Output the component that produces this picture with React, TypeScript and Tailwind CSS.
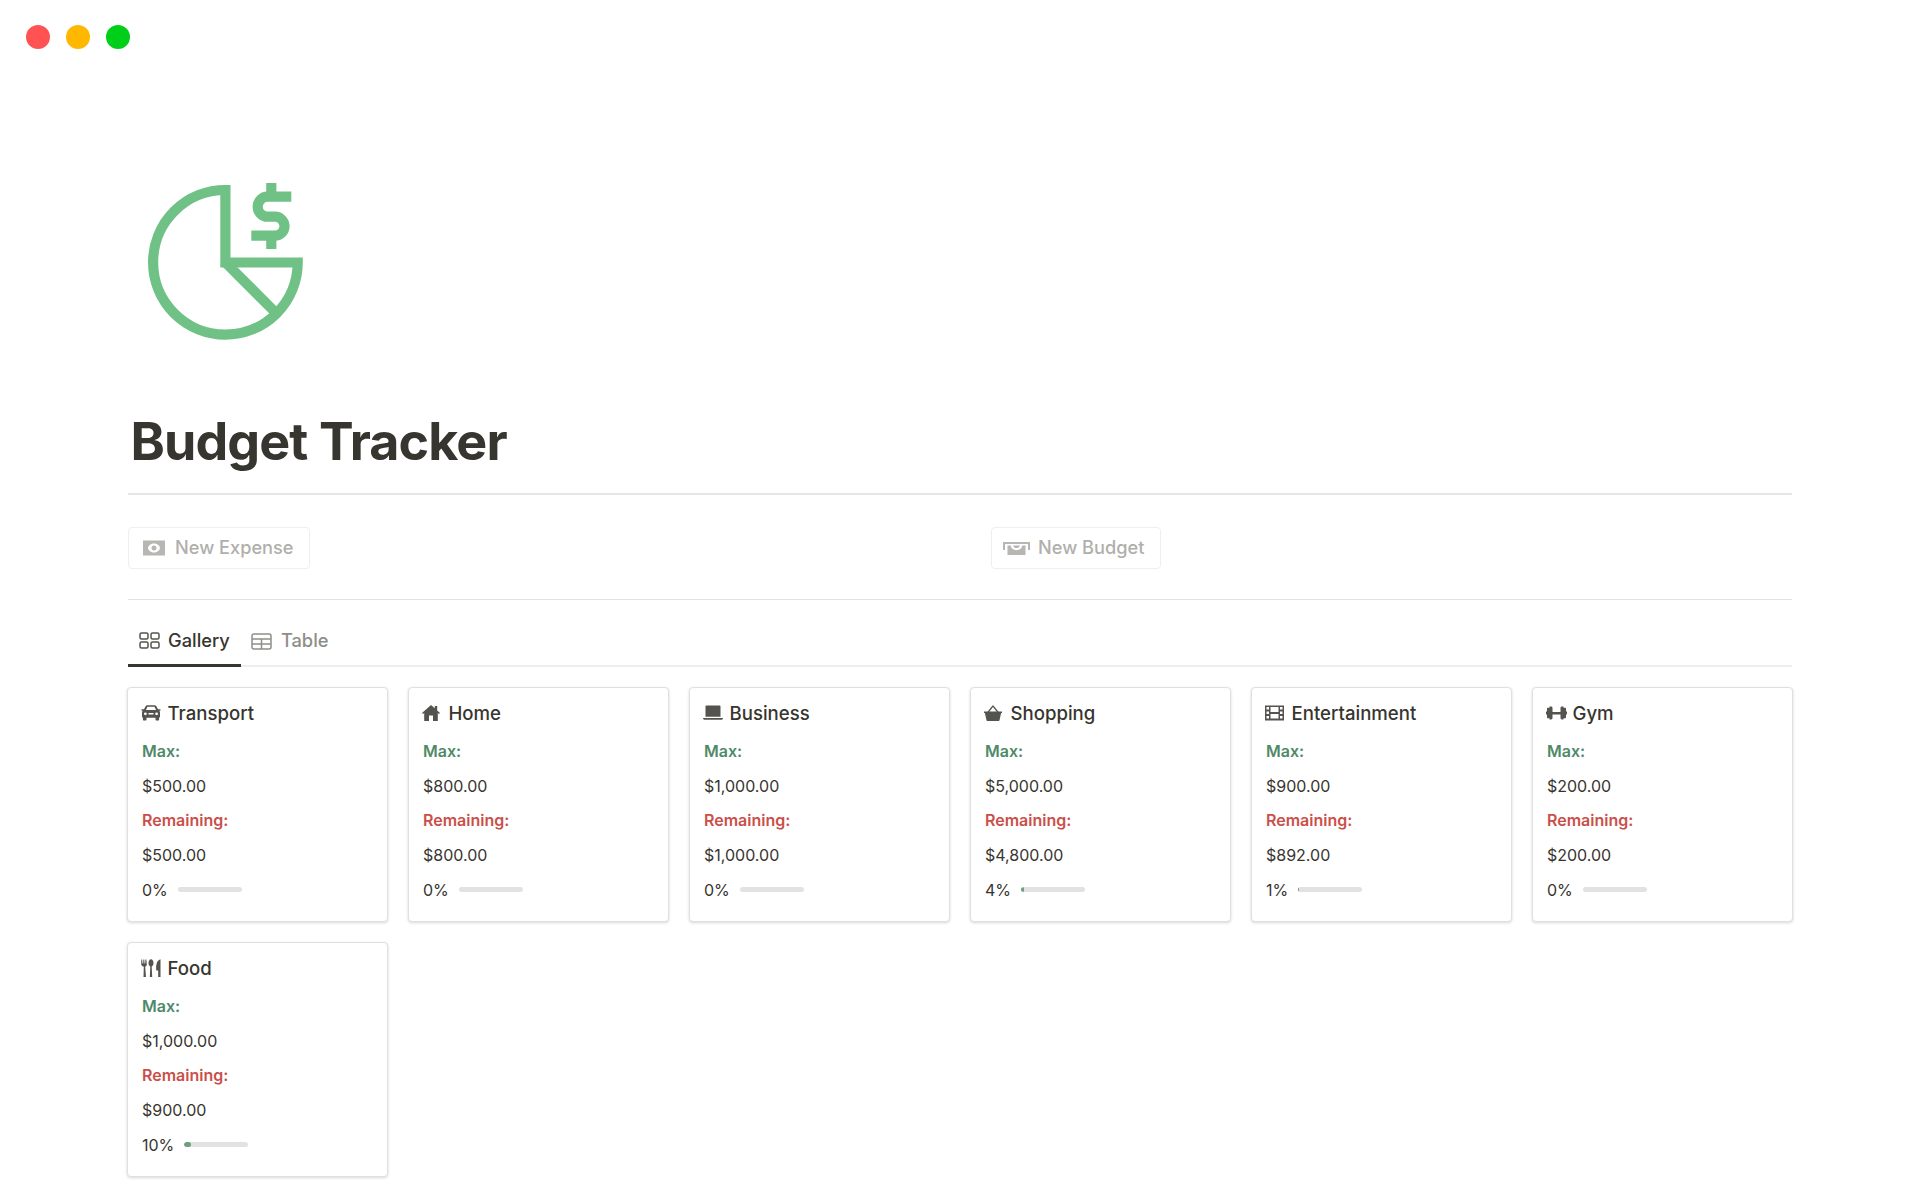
const budgets = [
  { name: 'Transport', icon: 'car', max: '$500.00', remaining: '$500.00', pct: 0 },
  { name: 'Home', icon: 'home', max: '$800.00', remaining: '$800.00', pct: 0 },
  { name: 'Business', icon: 'laptop', max: '$1,000.00', remaining: '$1,000.00', pct: 0 },
  { name: 'Shopping', icon: 'basket', max: '$5,000.00', remaining: '$4,800.00', pct: 4 },
  { name: 'Entertainment', icon: 'film', max: '$900.00', remaining: '$892.00', pct: 1 },
  { name: 'Gym', icon: 'gym', max: '$200.00', remaining: '$200.00', pct: 0 },
  { name: 'Food', icon: 'food', max: '$1,000.00', remaining: '$900.00', pct: 10 },
];

function PieIcon() {
  return (
    <svg width="170" height="170" viewBox="140 175 170 170" fill="none" stroke="#70c186" strokeWidth="10.2">
      <path d="M225.4 190 A72.3 72.3 0 1 0 297.7 262.5 H225.4 Z" strokeLinejoin="miter" />
      <path d="M225.4 262.5 L276 313" />
      <path d="M291.3 196.7 H267.7 a10 10 0 0 0 0 20 H275 a9.5 9.5 0 0 1 0 19 H251.3" />
      <path d="M271.3 183 V192 M271.3 240 V249" />
    </svg>
  );
}

function CardIcon({ name }: { name: string }) {
  const fill = '#55534e';
  switch (name) {
    case 'car':
      return (
        <svg width="20" height="16" viewBox="0 0 20 16" fill={fill}>
          <path d="M4.6 1.2C5 .5 5.6.2 6.4.2h7.2c.8 0 1.4.3 1.8 1l1.6 3.1h1.9c.4 0 .8.3.8.7s-.4.8-.8.8h-.7c.5.5.8 1.1.8 1.8v4.1c0 .5-.4.9-.9.9v1.9c0 .6-.4 1-1 1h-1.6c-.6 0-1-.4-1-1v-1.8H5.5v1.8c0 .6-.4 1-1 1H2.9c-.6 0-1-.4-1-1v-1.900c-.5 0-.9-.4-.9-.9V7.600c0-.7.3-1.300.8-1.800H1.100C.7 5.800.3 5.400.3 5s.4-.7.8-.7H3zM6.500 1.800 4.900 5h10.200l-1.600-3.200zM4.400 7.400a1.400 1.400 0 1 0 0 2.800 1.400 1.400 0 0 0 0-2.800zm11.200 0a1.400 1.400 0 1 0 0 2.800 1.400 1.400 0 0 0 0-2.800zM7.500 8v1.600h5V8z" fillRule="evenodd" />
        </svg>
      );
    case 'home':
      return (
        <svg width="18" height="16" viewBox="0 0 18 16" fill={fill}>
          <path d="M9 0 L12.800 3.300 V1 H15.200 V5.400 L18 7.900 L17 9 L15.800 8 V16 H11 V10.500 H7 V16 H2.200 V8 L1 9 L0 7.900 Z" />
        </svg>
      );
    case 'laptop':
      return (
        <svg width="20" height="16" viewBox="0 0 20 16" fill={fill}>
          <path d="M2.500 1.600C2.500.900 3 .400 3.700.400h12.600c.7 0 1.200.5 1.200 1.200v10.200h-15z" />
          <path d="M0 13h20c0 1-.8 1.800-1.800 1.800H1.800C.8 14.800 0 14 0 13z" />
        </svg>
      );
    case 'basket':
      return (
        <svg width="18" height="16" viewBox="0 0 18 16" fill={fill}>
          <path d="M0 6.400h18v1.700h-.9L15.500 15.300c-.1.400-.4.700-.9.700H3.400c-.5 0-.8-.3-.9-.7L.9 8.100H0z" />
          <path d="M3.500 6.700 8.100.900c.5-.6 1.300-.6 1.800 0l4.600 5.800-1.200.9L9 1.900 4.700 7.600z" />
        </svg>
      );
    case 'film':
      return (
        <svg width="19" height="16" viewBox="0 0 19 16" fill={fill}>
          <path fillRule="evenodd" d="M0 .500h19v15H0zM1.500 2v2.500H4V2zm0 4.500V9H4V6.500zm0 4.500v2.500H4V11zM15 2v2.500h2.500V2zm0 4.500V9h2.500V6.500zm0 4.500v2.500h2.500V11zM5.500 2v5h8V2zm0 7v4.500h8V9z" />
        </svg>
      );
    case 'gym':
      return (
        <svg width="21" height="16" viewBox="0 0 21 16" fill={fill}>
          <path d="M3.500 1.500h1.600c.8 0 1.400.6 1.400 1.400v4h8V2.900c0-.8.6-1.400 1.400-1.400h1.600v1.200H19c.6 0 1 .4 1 1v2.800h1v3h-1v2.800c0 .6-.4 1-1 1h-1.500v1.200h-1.600c-.8 0-1.400-.6-1.400-1.400V9.500h-8v3.600c0 .8-.6 1.400-1.400 1.400H3.500v-1.200H2c-.6 0-1-.4-1-1V9.500H0v-3h1V3.700c0-.6.4-1 1-1h1.500z" />
        </svg>
      );
    default:
      return (
        <svg width="20" height="18" viewBox="0 0 20 18" fill={fill}>
          <path d="M.3.400h.9l.3 4h.7l.2-4h.9l.2 4h.7l.3-4h.9l.4 5c0 1.100-.8 1.900-1.600 2.200L5 18H2.500l.3-10.400C2 7.300.2 6.500.2 5.400z" />
          <path d="M10 .300c1.500 0 2.500 1.800 2.500 3.800 0 1.700-.8 3-1.800 3.400L11.200 18H8.800l.5-10.500c-1-.4-1.800-1.700-1.800-3.400 0-2 1-3.800 2.500-3.800z" />
          <path d="M19.500.200V18h-2.300v-6.500h-1.900C14.900 7.500 15 1.500 19.500.200z" />
        </svg>
      );
  }
}

function BudgetCard({ name, icon, max, remaining, pct }: (typeof budgets)[number]) {
  return (
    <div className="h-[235px] rounded-[4px] border border-[#e1e0de] bg-white px-[14px] pt-[8px] shadow-[0_1px_3px_rgba(15,15,15,0.16)]">
      <div className="flex h-[35px] items-center text-[18.6px] font-medium text-[#37352f]">
        <span className="flex w-[24.5px] shrink-0 -translate-x-[1px] -translate-y-[1px] items-center">
          <CardIcon name={icon} />
        </span>
        <span className="ml-[1px]">{name}</span>
      </div>
      <div className="mt-[2.5px] flex h-[34.7px] items-center text-[16px] font-semibold text-[#4f8a68]">Max:</div>
      <div className="flex h-[34.7px] items-center text-[16px] text-[#37352f]">{max}</div>
      <div className="flex h-[34.7px] items-center text-[16px] font-semibold text-[#cb4f49]">Remaining:</div>
      <div className="flex h-[34.7px] items-center text-[16px] text-[#37352f]">{remaining}</div>
      <div className="flex h-[35px] items-center gap-[10px] text-[16px] text-[#37352f]">
        <span>{pct}%</span>
        <div className="h-[5px] w-[64px] overflow-hidden rounded-full bg-[#e3e2e0]">
          <div className="h-full rounded-full bg-[#6d9f82]" style={{ width: `${pct}%` }} />
        </div>
      </div>
    </div>
  );
}

export default function App() {
  return (
    <div className="h-[1200px] overflow-hidden bg-white font-['Inter',sans-serif]">
      {/* window controls */}
      <div className="flex gap-[16px] pl-[26px] pt-[25px]">
        <span className="h-[24px] w-[24px] rounded-full bg-[#ff5252]" />
        <span className="h-[24px] w-[24px] rounded-full bg-[#ffb700]" />
        <span className="h-[24px] w-[24px] rounded-full bg-[#00cf1a]" />
      </div>

      <div className="px-[128px]">
        <div className="ml-[12px] mt-[126px]">
          <PieIcon />
        </div>

        <h1 className="mt-[65px] pl-[2.500px] text-[52px] leading-[64px] font-bold tracking-[-0.0175em] text-[#37352f]">
          Budget Tracker
        </h1>
        <div className="mt-[19px] h-[2px] bg-[#e6e5e3]" />

        <div className="mt-[32px] grid grid-cols-2 gap-x-[62px]">
          <div>
            <button className="flex h-[42px] items-center gap-[10px] rounded-[4px] border border-[#efefee] pl-[14px] pr-[15px] text-[18.2px] font-medium text-[#b0afab]">
              <svg width="22" height="16" viewBox="0 0 22 16" fill="#b7b6b3">
                <path fillRule="evenodd" d="M0 .500h22v15H0zM11 3.500c-3.600 0-6 2.700-6 4.500s2.400 4.500 6 4.500 6-2.700 6-4.500-2.400-4.500-6-4.500zm0 2a2.500 2.500 0 1 1 0 5 2.500 2.500 0 0 1 0-5z" />
              </svg>
              New Expense
            </button>
          </div>
          <div>
            <button className="flex h-[42px] items-center gap-[8px] rounded-[4px] border border-[#efefee] pl-[11px] pr-[16px] text-[18.2px] font-medium text-[#b0afab]">
              <svg width="27" height="15" viewBox="0 0 27 15" fill="#b7b6b3">
                <path fillRule="evenodd" d="M0 1h27v2H2v6H0zM25 3h2v6h-2zM4.500 4.500h3.200c.4 2.800 2.700 4.700 5.800 4.700s5.400-1.900 5.800-4.700h3.200V14h-18zM10 4.500h7c-.3 1.500-1.800 2.600-3.500 2.600S10.300 6 10 4.500z" />
              </svg>
              New Budget
            </button>
          </div>
        </div>
        <div className="mt-[30px] h-[1px] bg-[#e3e2e0]" />

        {/* view tabs */}
        <div className="mt-[20px] flex h-[47px] border-b-2 border-[#eeeeed]">
          <div className="-mb-[2px] flex items-center gap-[8px] border-b-[3px] border-[#37352f] px-[11px] pb-[3px] text-[18.3px] font-medium text-[#37352f]">
            <svg width="21" height="17" viewBox="0 0 21 17" fill="none" stroke="#55534e" strokeWidth="1.500">
              <rect x="1" y="1" width="8" height="6" rx="1.500" />
              <rect x="12" y="1" width="8" height="6" rx="1.500" />
              <rect x="1" y="10" width="8" height="6" rx="1.500" />
              <rect x="12" y="10" width="8" height="6" rx="1.500" />
            </svg>
            Gallery
          </div>
          <div className="flex items-center gap-[9px] pl-[10px] pr-[11px] pb-[3px] text-[18.3px] font-medium text-[#8f8e8a]">
            <svg width="21" height="17" viewBox="0 0 21 17" fill="none" stroke="#8f8e8a" strokeWidth="1.500">
              <rect x="1" y="1" width="19" height="15" rx="2" />
              <path d="M1 6h19M1 11h19M10.500 6v10" />
            </svg>
            Table
          </div>
        </div>

        <div className="-mx-[1px] mt-[20px] grid grid-cols-6 gap-[20px]">
          {budgets.map((b) => (
            <BudgetCard key={b.name} {...b} />
          ))}
        </div>
      </div>
    </div>
  );
}
